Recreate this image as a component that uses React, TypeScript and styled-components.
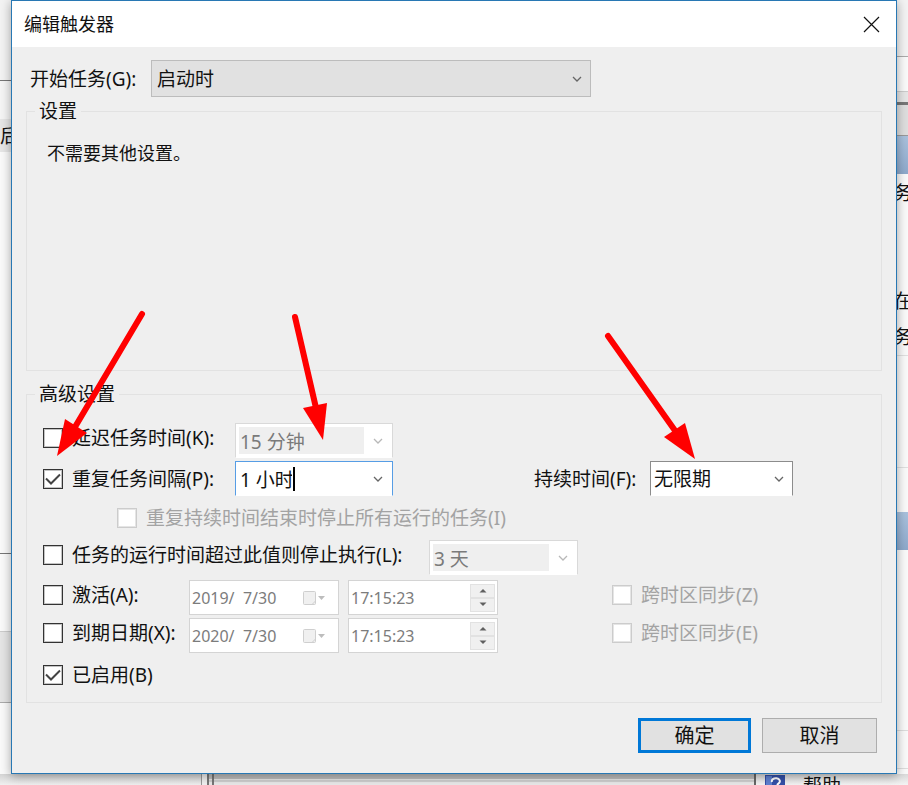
import React, { useId, useState } from "react";
import styled, { createGlobalStyle, css } from "styled-components";

const GlobalStyle = createGlobalStyle`
  * { box-sizing: border-box; }
  body {
    margin: 0;
    background: #f4f4f4;
    color: #111;
    font-family: "Noto Sans", "Noto Sans CJK SC", sans-serif;
    font-size: 19px;
    line-height: 24px;
  }
  input, select, button { font: inherit; color: inherit; margin: 0; }
`;

/* Window behind the dialog */

const Desktop = styled.div`
  position: relative;
  display: grid;
  grid-template-columns: 11px minmax(0, 1fr) 11px;
  grid-template-rows: 1fr 11px;
  min-height: 100vh;
  overflow: hidden;
`;

const Sliver = styled.div`
  display: flex;
  flex-direction: column;
  overflow: hidden;
  background: #fafafa;
`;

const Band = styled.div<{ $h: number; $bg?: string; $line?: string; $center?: boolean }>`
  flex: none;
  display: flex;
  align-items: center;
  justify-content: ${(p) => (p.$center ? "center" : "flex-start")};
  height: ${(p) => p.$h}px;
  background: ${(p) => p.$bg ?? "transparent"};
  border-bottom: ${(p) => (p.$line ? `1px solid ${p.$line}` : "0")};
  white-space: nowrap;
`;

const Footer = styled.div`
  grid-column: 1 / -1;
  display: flex;
  overflow: hidden;
  background: #f0f0f0;
`;

const FooterLeft = styled.div`
  width: 202px;
  border-right: 1px solid #999;
  background: linear-gradient(#d4d4d4, #f0f0f0);
`;

const FooterTrack = styled.div`
  flex: 1;
  margin-left: 5px;
  border-left: 7px double #777;
  border-right: 2px solid #666;
  background: linear-gradient(#bdbdbd 0 45%, #e6e6e6 45% 55%, #cfcfcf 55% 70%, #e8e8e8 70%);
`;

const FooterHelp = styled.div`
  display: flex;
  align-items: flex-start;
  gap: 18px;
  width: 152px;
  padding-left: 9px;
  background: linear-gradient(#dadada, #f4f4f4);
`;

/* Dialog */

const Dialog = styled.form`
  z-index: 1;
  display: flex;
  flex-direction: column;
  border: 1px solid #2878b4;
  background: #efefef;
  box-shadow: 0 2px 10px rgba(0, 0, 0, 0.35);
`;

const TitleBar = styled.header`
  display: flex;
  align-items: center;
  justify-content: space-between;
  height: 46px;
  padding: 0 16px 0 12px;
  background: #fff;
`;

const Title = styled.h1`
  margin: 0;
  font-size: 18px;
  font-weight: 400;
`;

const CloseButton = styled.button`
  display: flex;
  padding: 0;
  border: 0;
  background: none;
`;

const Body = styled.div`
  flex: 1;
  display: flex;
  flex-direction: column;
  padding: 13px 14px 20px;
`;

const StartRow = styled.div`
  display: flex;
  align-items: center;
  height: 37px;
  padding-left: 4px;
`;

const StartLabel = styled.label`
  width: 121px;
  white-space: nowrap;
`;

const Group = styled.fieldset<{ $grow?: boolean }>`
  min-width: 0;
  margin: ${(p) => (p.$grow ? "2px 0 0" : "11px 0 0")};
  padding: ${(p) => (p.$grow ? "18px 20px" : "17px 16px 8px")};
  border: 1px solid #e2e2e2;
  ${(p) => p.$grow && css`flex: 1;`}
`;

const Legend = styled.legend<{ $inset?: boolean }>`
  margin-left: ${(p) => (p.$inset ? "-12px" : "-8px")};
  padding: 0 4px;
  line-height: 24px;
`;

const Note = styled.p`
  margin: 0;
  font-size: 18px;
`;

const Rows = styled.div`
  display: flex;
  flex-direction: column;
  gap: 3px;
`;

const Row = styled.div<{ $h?: number; $indent?: boolean; $top?: boolean }>`
  display: flex;
  align-items: ${(p) => (p.$top ? "flex-start" : "center")};
  height: ${(p) => p.$h ?? 35}px;
  padding-left: ${(p) => (p.$indent ? "74px" : "0")};
`;

const CheckLabel = styled.label<{ $w?: number; $off?: boolean }>`
  flex: none;
  display: flex;
  align-items: center;
  gap: 9px;
  width: ${(p) => (p.$w ? `${p.$w}px` : "auto")};
  height: 30px;
  color: ${(p) => (p.$off ? "#a3a3a3" : "#111")};
  white-space: nowrap;
`;

const tick =
  "url(\"data:image/svg+xml,%3Csvg xmlns='http://www.w3.org/2000/svg' viewBox='0 0 18 18'%3E%3Cpath d='M2 8.5 7 13.5 16 4.5' fill='none' stroke='%23444' stroke-width='2'/%3E%3C/svg%3E\")";

const CheckBox = styled.input`
  flex: none;
  appearance: none;
  width: 20px;
  height: 20px;
  border: 1px solid #333;
  outline: 1px solid rgba(60, 60, 60, 0.3);
  outline-offset: -2px;
  background: #fff;
  &:checked { background: #fff ${tick} center / 18px 18px no-repeat; }
  &:disabled { border-color: #ccc; outline-color: rgba(190, 190, 190, 0.4); }
`;

const SelectWrap = styled.div<{ $w: number }>`
  position: relative;
  width: ${(p) => p.$w}px;
  svg {
    position: absolute;
    right: 8px;
    top: 50%;
    margin-top: -6px;
    pointer-events: none;
  }
`;

const Select = styled.select<{ $gray?: boolean }>`
  appearance: none;
  display: block;
  width: 100%;
  height: ${(p) => (p.$gray ? 37 : 35)}px;
  padding: 0 28px 0 ${(p) => (p.$gray ? 5 : 3)}px;
  border: 1px solid ${(p) => (p.$gray ? "#bcbcbc" : "#8c8c8c")};
  border-bottom-color: ${(p) => (p.$gray ? "#bcbcbc" : "#fff")};
  border-radius: 0;
  outline: 0;
  background: ${(p) => (p.$gray ? "#e1e1e1" : "#fff")};
`;

const Combo = styled.div<{ $w: number; $active?: boolean }>`
  display: flex;
  align-items: center;
  width: ${(p) => p.$w}px;
  height: 35px;
  padding: 3px 0 3px 3px;
  border: 1px solid ${(p) => (p.$active ? "#569de5" : "#d9d9d9")};
  border-bottom-color: #fff;
  background: #fff;
`;

const ComboInput = styled.input<{ $fit?: boolean }>`
  flex: ${(p) => (p.$fit ? "none" : "1")};
  min-width: 0;
  width: ${(p) => (p.$fit ? "54px" : "auto")};
  height: 27px;
  padding: 0 1px;
  border: 0;
  outline: 0;
  background: transparent;
  caret-color: transparent;
  &:disabled { background: #efefef; color: #7a7a7a; }
`;

const Caret = styled.span`
  width: 2px;
  height: 24px;
  margin-right: auto;
  background: #000;
`;

const ComboButton = styled.button`
  display: flex;
  justify-content: center;
  align-items: center;
  width: 28px;
  height: 27px;
  padding: 0;
  border: 0;
  background: none;
`;

const Field = styled.div`
  flex: none;
  display: flex;
  align-items: center;
  width: 150px;
  height: 35px;
  margin-right: 9px;
  padding: 2px;
  border: 1px solid #d4d4d4;
  background: #fff;
`;

const FieldInput = styled.input`
  flex: 1;
  min-width: 0;
  height: 29px;
  padding: 0;
  border: 0;
  background: transparent;
  font-size: 16px;
  &:disabled { color: #7c7c7c; }
`;

const Spinner = styled.div`
  display: flex;
  flex-direction: column;
  width: 25px;
`;

const SpinButton = styled.button`
  display: flex;
  align-items: center;
  justify-content: center;
  height: 14px;
  padding: 0;
  border: 1px solid #e2e2e2;
  background: #f0f0f0;
`;

const Duration = styled.label`
  width: 116px;
  margin-left: 141px;
  white-space: nowrap;
`;

const Sync = styled.div`
  margin-left: 105px;
`;

const Actions = styled.div`
  display: flex;
  justify-content: flex-end;
  gap: 11px;
  margin-top: 15px;
  padding-right: 5px;
`;

const ActionButton = styled.button<{ $primary?: boolean }>`
  width: ${(p) => (p.$primary ? 113 : 115)}px;
  height: 35px;
  padding: 0;
  border: ${(p) => (p.$primary ? "3px solid #0078d7" : "1px solid #adadad")};
  background: #e1e1e1;
  font-size: 20px;
`;

const Arrows = styled.svg`
  position: absolute;
  z-index: 2;
  left: 0;
  top: 0;
  pointer-events: none;
`;

function Chevron({ color = "#666" }: { color?: string }) {
  return (
    <svg width="12" height="12" viewBox="0 0 12 12" aria-hidden="true">
      <path d="M2 4l4 4 4-4" fill="none" stroke={color} strokeWidth="1.3" />
    </svg>
  );
}

function Check({ text, checked, off, width }: { text: string; checked?: boolean; off?: boolean; width?: number }) {
  const [on, setOn] = useState(!!checked);
  return (
    <CheckLabel $w={width} $off={off}>
      <CheckBox type="checkbox" checked={on} disabled={off} onChange={() => setOn(!on)} />
      {text}
    </CheckLabel>
  );
}

function ComboBox({ value, width, label, active }: { value: string; width: number; label: string; active?: boolean }) {
  return (
    <Combo $w={width} $active={active}>
      <ComboInput aria-label={label} defaultValue={value} disabled={!active} $fit={active} />
      {active && <Caret />}
      <ComboButton type="button" aria-label={label} disabled={!active}>
        <Chevron color={active ? "#666" : "#b8b8b8"} />
      </ComboButton>
    </Combo>
  );
}

function DateTime({ date, label }: { date: string; label: string }) {
  return (
    <>
      <Field>
        <FieldInput aria-label={`${label} 日期`} defaultValue={date} disabled />
        <svg width="34" height="18" viewBox="0 0 34 18" aria-hidden="true">
          <rect x="1.5" y="2.5" width="12" height="13" rx="1" fill="#f0f0f0" stroke="#cfcfcf" />
          <path d="M10 15.5l3.500-3.500" stroke="#cfcfcf" />
          <path d="M16 7h7l-3.500 4z" fill="#bdbdbd" />
        </svg>
      </Field>
      <Field>
        <FieldInput aria-label={`${label} 时间`} defaultValue="17:15:23" disabled />
        <Spinner>
          <SpinButton type="button" aria-label="增加" disabled>
            <svg width="8" height="5" viewBox="0 0 8 5"><path d="M0.500 4.500L4 1l3.500 3.500z" fill="#606060" /></svg>
          </SpinButton>
          <SpinButton type="button" aria-label="减少" disabled>
            <svg width="8" height="5" viewBox="0 0 8 5"><path d="M0.500 0.500L4 4l3.500-3.500z" fill="#606060" /></svg>
          </SpinButton>
        </Spinner>
      </Field>
    </>
  );
}

export default function App() {
  const startId = useId();
  const durationId = useId();
  return (
    <>
      <GlobalStyle />
      <Desktop>
        <Sliver>
          <Band $h={81} $bg="#f3f3f3" $line="#777" />
          <Band $h={38} $bg="#f5f5f5" />
          <Band $h={33} $bg="#e6e6e6">后</Band>
          <Band $h={402} $line="#777" />
          <Band $h={78} $line="#ccc" />
          <Band $h={71} $bg="#e5e5e5" $line="#aaa" />
        </Sliver>
        <Dialog onSubmit={(e) => e.preventDefault()}>
          <TitleBar>
            <Title>编辑触发器</Title>
            <CloseButton type="button" aria-label="关闭">
              <svg width="17" height="17" viewBox="0 0 17 17">
                <path d="M1 1l15 15M16 1L1 16" stroke="#111" strokeWidth="1.200" />
              </svg>
            </CloseButton>
          </TitleBar>
          <Body>
            <StartRow>
              <StartLabel htmlFor={startId}>开始任务(G):</StartLabel>
              <SelectWrap $w={440}>
                <Select id={startId} $gray defaultValue="启动时">
                  <option>启动时</option>
                </Select>
                <Chevron />
              </SelectWrap>
            </StartRow>
            <Group $grow>
              <Legend $inset>设置</Legend>
              <Note>不需要其他设置。</Note>
            </Group>
            <Group>
              <Legend>高级设置</Legend>
              <Rows>
                <Row $top>
                  <Check text="延迟任务时间(K):" width={192} />
                  <ComboBox value="15 分钟" width={158} label="延迟任务时间" />
                </Row>
                <Row>
                  <Check text="重复任务间隔(P):" width={192} checked />
                  <ComboBox value="1 小时" width={158} label="重复任务间隔" active />
                  <Duration htmlFor={durationId}>持续时间(F):</Duration>
                  <SelectWrap $w={143}>
                    <Select id={durationId} defaultValue="无限期">
                      <option>无限期</option>
                    </Select>
                    <Chevron />
                  </SelectWrap>
                </Row>
                <Row $h={38} $indent>
                  <Check text="重复持续时间结束时停止所有运行的任务(I)" off />
                </Row>
                <Row $h={37} $top>
                  <Check text="任务的运行时间超过此值则停止执行(L):" width={386} />
                  <ComboBox value="3 天" width={149} label="停止执行时限" />
                </Row>
                <Row $top>
                  <Check text="激活(A):" width={146} />
                  <DateTime date="2019/  7/30" label="激活" />
                  <Sync><Check text="跨时区同步(Z)" off /></Sync>
                </Row>
                <Row $top>
                  <Check text="到期日期(X):" width={146} />
                  <DateTime date="2020/  7/30" label="到期" />
                  <Sync><Check text="跨时区同步(E)" off /></Sync>
                </Row>
                <Row $h={38}>
                  <Check text="已启用(B)" checked />
                </Row>
              </Rows>
            </Group>
            <Actions>
              <ActionButton type="submit" $primary>确定</ActionButton>
              <ActionButton type="button">取消</ActionButton>
            </Actions>
          </Body>
        </Dialog>
        <Sliver>
          <Band $h={57} $bg="#f3f3f3" $line="#aaa" />
          <Band $h={35} $line="#ccc" />
          <Band $h={10} $bg="#e6e6e6" />
          <Band $h={3} $bg="#777" />
          <Band $h={31} $bg="#dedede" $line="#999" />
          <Band $h={38} $bg="linear-gradient(#a9c1dd, #8ea9cb)" />
          <Band $h={38} $center>务</Band>
          <Band $h={70} />
          <Band $h={37} $center>在</Band>
          <Band $h={37} $center $line="#e0e0e0">务</Band>
          <Band $h={112} $line="#e0e0e0" />
          <Band $h={44} />
          <Band $h={38} $bg="linear-gradient(#a9c1dd, #8ea9cb)" />
          <Band $h={181} $line="#ddd" />
          <Band $h={38} $line="#ddd" />
        </Sliver>
        <Footer>
          <FooterLeft />
          <FooterTrack />
          <FooterHelp>
            <svg width="20" height="11" viewBox="0 0 20 11" aria-hidden="true">
              <rect width="20" height="20" y="1" fill="#3450a8" />
              <rect x="1" y="2" width="6" height="10" fill="#5f80d0" />
              <path d="M7 8a4 3 0 1 1 7 1l-2 2" fill="none" stroke="#fff" strokeWidth="2" />
            </svg>
            <span>帮助</span>
          </FooterHelp>
        </Footer>
        <Arrows width="908" height="785" viewBox="0 0 908 785" aria-hidden="true">
          <g stroke="#f00" strokeWidth="6" strokeLinecap="round">
            <path d="M142 314L75 427" />
            <path d="M295 317L316 408" />
            <path d="M608 336L676 432" />
          </g>
          <g fill="#f00">
            <path d="M57 456L65 419L87 433Z" />
            <path d="M323 440L303 408L327 403Z" />
            <path d="M695 459L664 437L685 423Z" />
          </g>
        </Arrows>
      </Desktop>
    </>
  );
}
